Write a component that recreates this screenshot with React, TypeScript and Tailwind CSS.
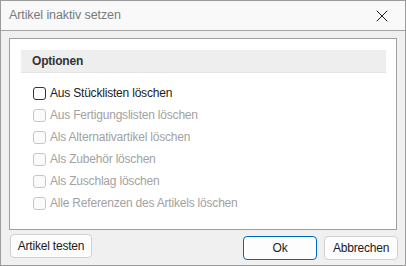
import { X } from 'lucide-react';

const options = [
  { label: 'Aus Stücklisten löschen', enabled: true },
  { label: 'Aus Fertigungslisten löschen', enabled: false },
  { label: 'Als Alternativartikel löschen', enabled: false },
  { label: 'Als Zubehör löschen', enabled: false },
  { label: 'Als Zuschlag löschen', enabled: false },
  { label: 'Alle Referenzen des Artikels löschen', enabled: false },
];

export default function App() {
  return (
    <div
      className="w-[406px] h-[266px] border border-[#9c9c9c] bg-[#f0f0f0] flex flex-col text-[12px] tracking-[-0.2px] text-[#1b1b1b]"
      style={{ fontFamily: '"Segoe UI", "Liberation Sans", Arial, sans-serif' }}
    >
      {/* Title bar */}
      <div className="h-[30px] shrink-0 bg-[#f9f9f9] border-b border-[#a3a3a3] flex items-center justify-between pl-[8px] pr-[13px]">
        <span className="text-[12.5px] tracking-[-0.1px] text-[#7a7a7a]">Artikel inaktiv setzen</span>
        <X className="w-[20px] h-[20px] text-[#1b1b1b]" strokeWidth={1.2} absoluteStrokeWidth />
      </div>

      {/* Body */}
      <div className="flex-1 flex flex-col px-[8px] pt-[7px]">
        <div className="h-[192px] bg-white border border-[#a0a0a0] pt-[11px] pl-[11px] pr-[10px]">
          <div className="h-[23px] bg-[#eeeeee] border-b border-[#e4e4e4] flex items-center pl-[11px] font-semibold text-[#333333]">
            Optionen
          </div>
          <div className="flex flex-col pt-[9px] pl-[12px]">
            {options.map((o) => (
              <div key={o.label} className="h-[22px] flex items-center gap-[4px]">
                <span
                  className={
                    o.enabled
                      ? 'w-[13px] h-[13px] rounded-[3px] border border-[#333333] bg-white'
                      : 'w-[13px] h-[13px] rounded-[3px] border border-[#c6c6c6] bg-[#fbfbfb]'
                  }
                />
                <span className={o.enabled ? 'text-[#1b1b1b]' : 'text-[#a2a2a2]'}>{o.label}</span>
              </div>
            ))}
          </div>
        </div>

        {/* Footer */}
        <div className="flex items-start pl-[1px] pr-0 pt-[4px]">
          <button className="w-[82px] h-[24px] bg-[#fdfdfd] border border-[#d0d0d0] rounded-[4px] text-[#1b1b1b]">
            Artikel testen
          </button>
          <div className="ml-auto flex gap-[7px] mt-[2px] mr-[-1px]">
            <button className="w-[74px] h-[24px] bg-[#fdfdfd] border border-[#0067c0] rounded-[4px] text-[#1b1b1b]">
              Ok
            </button>
            <button className="w-[74px] h-[24px] bg-[#fdfdfd] border border-[#d0d0d0] rounded-[4px] text-[#1b1b1b]">
              Abbrechen
            </button>
          </div>
        </div>
      </div>
    </div>
  );
}
